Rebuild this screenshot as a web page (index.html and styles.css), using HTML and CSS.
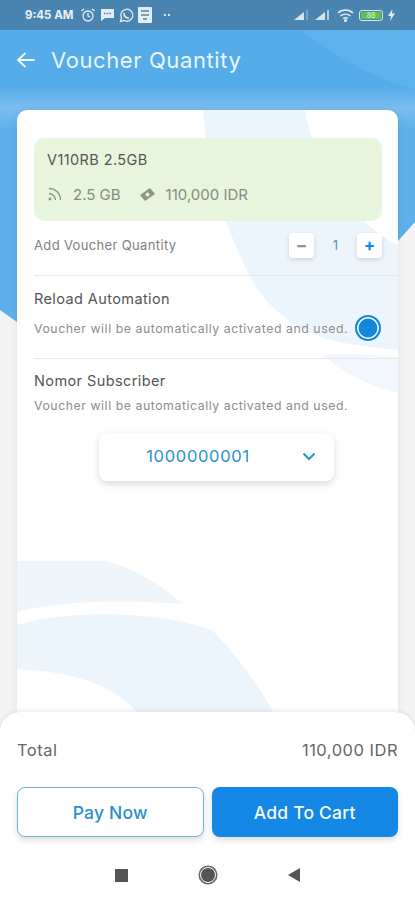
FILE: index.html
```html
<!DOCTYPE html>
<html lang="en">
<head>
    <meta charset="UTF-8">
    <meta name="viewport" content="width=device-width, initial-scale=1.0">
    <title>Voucher Quantity</title>
    <link rel="stylesheet" href="styles.css">
</head>
<body>

    <div class="page">
        <!-- blue backdrop behind header and card -->
        <svg class="backdrop" width="415" height="330" viewBox="0 0 415 330">
            <defs>
                <linearGradient id="band" x1="0" y1="0" x2="0" y2="1">
                    <stop offset="0" stop-color="#55ace9"/>
                    <stop offset="0.5" stop-color="#7cbdef"/>
                    <stop offset="1" stop-color="#5eb0ec"/>
                </linearGradient>
            </defs>
            <path d="M0 0H415V222L398 241L320 250C200 240 100 290 17 322L0 310Z" fill="#5eb0ec"/>
            <path d="M0 30H415V86H0Z" fill="#55ace9"/>
            <path d="M0 86H415V130H0Z" fill="url(#band)"/>
            <path d="M300 30C340 60 380 80 415 90V30Z" fill="#5db2ec"/>
        </svg>

        <div class="status-bar">
            <span class="clock">9:45 AM</span>
            <svg class="status-icon" width="16" height="16" viewBox="0 0 16 16" fill="none" stroke="#e4eef6" stroke-width="1.3">
                <circle cx="8" cy="9" r="5"/><path d="M8 6V9L10 10M1.5 4L4 2M14.5 4L12 2"/>
            </svg>
            <svg class="status-icon" width="15" height="14" viewBox="0 0 15 14">
                <path d="M1 1H14V10H5L1 13Z" fill="#e4eef6"/><path d="M4 5.5H11" stroke="#4a85b2" stroke-width="1.4" stroke-dasharray="1.5 1.2"/>
            </svg>
            <svg class="status-icon" width="15" height="15" viewBox="0 0 15 15" fill="none" stroke="#e4eef6" stroke-width="1.3">
                <path d="M1.5 13.5L2.5 10A6 6 0 1 1 5 12.5Z"/><path d="M5 5C5 8 7 10 10 10" stroke-width="1.6"/>
            </svg>
            <svg class="status-icon" width="14" height="16" viewBox="0 0 14 16">
                <rect width="14" height="16" rx="1" fill="#e4eef6"/><path d="M3 4H11M3 8H11M5 12H9" stroke="#7d9db5" stroke-width="2"/>
            </svg>
            <span class="status-dots"></span>
            <span class="status-spacer"></span>
            <svg class="status-icon signal" width="16" height="12" viewBox="0 0 16 12">
                <path d="M1 11L11 3V11Z" fill="#d6e4ee"/><path d="M14 1V11" stroke="#8fb1c9" stroke-width="1.5"/>
            </svg>
            <svg class="status-icon signal" width="16" height="12" viewBox="0 0 16 12">
                <path d="M1 11L11 3V11Z" fill="#d6e4ee"/><path d="M14 1V11" stroke="#d6e4ee" stroke-width="1.5"/>
            </svg>
            <svg class="status-icon wifi" width="17" height="14" viewBox="0 0 17 14" fill="none" stroke="#e4eef6" stroke-width="1.4">
                <path d="M1 5C5 1 12 1 16 5M3.5 8C6 5.5 11 5.5 13.5 8M6 10.5C7.5 9.5 9.5 9.500 11 10.5"/>
                <circle cx="8.5" cy="12.5" r="0.8" fill="#e4eef6"/>
            </svg>
            <span class="battery"><span class="battery-fill">88</span></span>
            <svg class="status-icon" width="7" height="12" viewBox="0 0 7 12">
                <path d="M4.5 0L0 7H3L2 12L7 4.5H4Z" fill="#e4eef6"/>
            </svg>
        </div>

        <header class="app-header">
            <svg width="20" height="18" viewBox="0 0 20 18" fill="none" stroke="#f2f9fe" stroke-width="1.8">
                <path d="M18.500 9H2M9.500 2L2 9L9.500 16"/>
            </svg>
            <h1>Voucher Quantity</h1>
        </header>

        <main class="content">
            <section class="card">
                <svg class="card-art" width="381" height="602" viewBox="0 0 381 602">
                    <path d="M186 0H288C296 50 330 110 381 135V240C340 236 320 232 306 228C270 215 245 190 235 170C205 115 190 50 186 0Z" fill="#edf5fc"/>
                    <path d="M306 245C330 243 360 245 381 247V283C350 275 325 262 306 245Z" fill="#f1f7fc"/>
                    <path d="M0 451H88C120 458 150 480 166 494C110 490 50 490 0 502Z" fill="#eef6fc"/>
                    <path d="M0 515C50 500 140 500 195 520C220 545 245 580 256 602H120C90 570 50 562 0 559Z" fill="#edf5fc"/>
                </svg>

                <div class="voucher">
                    <div class="voucher-name">V110RB 2.5GB</div>
                    <div class="voucher-meta">
                        <svg width="16" height="16" viewBox="0 0 16 16" fill="none" stroke="#8c9488" stroke-width="1.4">
                            <path d="M2 2.500C8.500 2.500 13.500 7.500 13.500 14M2 7.500C5.500 7.500 8.500 10.500 8.500 14"/>
                            <circle cx="3" cy="13" r="1.400" fill="#8c9488" stroke="none"/>
                        </svg>
                        <span class="meta-text">2.5 GB</span>
                        <svg class="money" width="17" height="15" viewBox="0 0 17 15">
                            <path d="M1 8L11 1L16 7L6 14Z" fill="#8c9488"/>
                            <circle cx="8.500" cy="7.500" r="2" fill="#e8f5dd"/>
                        </svg>
                        <span class="meta-text">110,000 IDR</span>
                    </div>
                </div>

                <div class="quantity-row">
                    <span class="small-text">Add Voucher Quantity</span>
                    <div class="stepper">
                        <button type="button" class="step-button minus">&minus;</button>
                        <span class="step-value">1</span>
                        <button type="button" class="step-button">+</button>
                    </div>
                </div>

                <div class="option">
                    <h3>Reload Automation</h3>
                    <div class="option-line">
                        <span class="small-text">Voucher will be automatically activated and used.</span>
                        <span class="radio"></span>
                    </div>
                </div>

                <div class="option subscriber">
                    <h3>Nomor Subscriber</h3>
                    <span class="small-text">Voucher will be automatically activated and used.</span>
                </div>

                <div class="dropdown">
                    <span>1000000001</span>
                    <svg class="chevron" width="14" height="9" viewBox="0 0 14 9" fill="none" stroke="#2a8fcf" stroke-width="2">
                        <path d="M1.500 1.500L7 7L12.500 1.500"/>
                    </svg>
                </div>
            </section>
        </main>

        <footer class="sheet">
            <div class="total-row">
                <span>Total</span>
                <span>110,000 IDR</span>
            </div>
            <div class="sheet-buttons">
                <button type="button" class="btn btn-outline">Pay Now</button>
                <button type="button" class="btn btn-solid">Add To Cart</button>
            </div>
        </footer>

        <nav class="nav-bar">
            <span class="nav-square"></span>
            <span class="nav-circle"></span>
            <span class="nav-back"></span>
        </nav>
    </div>

</body>
</html>
```

FILE: styles.css
```css
body {
    margin: 0;
    background: #f4f4f4;
    font-family: Inter, 'Open Sans', sans-serif;
    color: #555;
}

.page {
    position: relative;
    width: 415px;
    height: 900px;
    display: flex;
    flex-direction: column;
    overflow: hidden;
}

.backdrop {
    position: absolute;
    top: 0;
    left: 0;
}

/* status bar */
.status-bar {
    position: relative;
    height: 30px;
    background: #4a85b2;
    display: flex;
    align-items: center;
    gap: 4px;
    padding: 0 20px 0 25px;
    box-sizing: border-box;
    flex-shrink: 0;
}

.clock {
    font-size: 11.5px;
    font-weight: 700;
    color: #e8f1f8;
    margin-right: 3px;
    white-space: nowrap;
}

.status-dots {
    width: 7px;
    height: 2px;
    margin-left: 7px;
    background: radial-gradient(circle, #dbe8f2 1px, transparent 1.200px) 0 0 / 4px 2px repeat-x;
}

.status-spacer {
    flex: 1;
}

.signal {
    margin-right: 1px;
}

.wifi {
    margin: 0 1px 0 2px;
}

.battery {
    width: 24px;
    height: 11px;
    border: 1px solid #d9e8d6;
    border-radius: 3px;
    padding: 1px;
    box-sizing: border-box;
    display: flex;
    margin-right: 1px;
}

.battery-fill {
    flex: 1;
    background: #5cc24e;
    border-radius: 1px;
    color: #e9f7e6;
    font-size: 7px;
    line-height: 7px;
    text-align: center;
}

/* header */
.app-header {
    position: relative;
    height: 60px;
    display: flex;
    align-items: center;
    gap: 15px;
    padding-left: 16px;
    flex-shrink: 0;
}

.app-header h1 {
    margin: 0;
    font-size: 22px;
    font-weight: 400;
    color: #eaf6fe;
    letter-spacing: 0.6px;
}

/* card */
.content {
    position: relative;
    flex: 1;
    padding: 20px 17px 0;
    min-height: 0;
    display: flex;
}

.card {
    position: relative;
    flex: 1;
    background: #fff;
    border-radius: 10px 10px 0 0;
    box-shadow: 0 0 8px rgba(0, 0, 0, 0.08);
    padding: 28px 0 0 17px;
    box-sizing: border-box;
    overflow: hidden;
}

.card-art {
    position: absolute;
    top: 0;
    left: 0;
}

.voucher {
    position: relative;
    width: 348px;
    height: 83px;
    box-sizing: border-box;
    background: #e8f5dd;
    border-radius: 10px;
    padding: 13px 13px;
}

.voucher-name {
    font-size: 14.500px;
    font-weight: 400;
    color: #555;
    line-height: 18px;
    letter-spacing: 0.4px;
}

.voucher-meta {
    display: flex;
    align-items: center;
    margin-top: 16px;
    color: #858d82;
    font-size: 15px;
    height: 18px;
}

.meta-text {
    margin-left: 10px;
}

.money {
    margin-left: 18px;
}

.quantity-row {
    position: relative;
    display: flex;
    justify-content: space-between;
    align-items: center;
    width: 348px;
    height: 54px;
    box-sizing: border-box;
    padding-bottom: 6px;
}

.small-text {
    font-size: 12.300px;
    color: #8d8d8d;
    white-space: nowrap;
    letter-spacing: 0.55px;
}

.quantity-row .small-text {
    color: #808080;
    font-size: 13px;
    letter-spacing: 0.35px;
}

.stepper {
    display: flex;
    align-items: center;
}

.step-button {
    width: 25px;
    height: 25px;
    padding: 0;
    border: none;
    border-radius: 4px;
    background: #fff;
    box-shadow: 0 2px 5px rgba(0, 0, 0, 0.14);
    color: #1488dc;
    font-family: inherit;
    font-size: 17px;
    font-weight: 700;
    line-height: 25px;
}

.step-button.minus {
    color: #7e98aa;
}

.step-value {
    width: 43px;
    text-align: center;
    font-size: 13px;
    color: #5f8fae;
}

.option {
    position: relative;
    border-top: 1px solid #e6e8ea;
    height: 83px;
    box-sizing: border-box;
    padding-top: 14px;
}

.option h3 {
    margin: 0;
    font-size: 14.500px;
    font-weight: 400;
    line-height: 18px;
    color: #555;
    letter-spacing: 0.4px;
}

.option-line {
    display: flex;
    align-items: center;
    margin-top: 7px;
    height: 26px;
}

.radio {
    width: 26px;
    height: 26px;
    box-sizing: border-box;
    margin-left: 7px;
    border: 2px solid #1488dc;
    border-radius: 50%;
    background: #1488dc;
    box-shadow: inset 0 0 0 1.500px #fff;
}

.subscriber {
    height: 75px;
    padding-top: 13px;
}

.subscriber .small-text {
    display: block;
    margin-top: 8px;
}

.dropdown {
    position: relative;
    width: 235px;
    height: 48px;
    margin-left: 65px;
    display: flex;
    align-items: center;
    justify-content: center;
    box-sizing: border-box;
    background: #fff;
    border-radius: 8px;
    box-shadow: 0 3px 7px rgba(0, 0, 0, 0.15);
    color: #2a8fcf;
    font-size: 16.500px;
    letter-spacing: 0.7px;
    padding-right: 37px;
    padding-bottom: 2px;
}

.chevron {
    position: absolute;
    right: 18px;
    top: 19px;
}

/* bottom sheet */
.sheet {
    position: relative;
    height: 138px;
    box-sizing: border-box;
    background: #fff;
    border-radius: 20px 20px 0 0;
    box-shadow: 0 -1px 4px rgba(0, 0, 0, 0.1);
    padding: 28px 17px 0;
    flex-shrink: 0;
}

.total-row {
    display: flex;
    justify-content: space-between;
    font-size: 16.500px;
    letter-spacing: 0.5px;
    line-height: 20px;
    color: #666;
}

.sheet-buttons {
    display: grid;
    grid-template-columns: 1fr 1fr;
    gap: 8px;
    margin-top: 27px;
}

.btn {
    height: 50px;
    border-radius: 8px;
    font-family: inherit;
    font-size: 17.500px;
    font-weight: 500;
    letter-spacing: 0.2px;
    box-shadow: 0 3px 6px rgba(0, 0, 0, 0.14);
}

.btn-outline {
    background: #fff;
    border: 1.500px solid #74b4d8;
    color: #2a8fcf;
}

.btn-solid {
    background: #1488e4;
    border: none;
    color: #f4faff;
}

/* android nav */
.nav-bar {
    position: relative;
    height: 50px;
    background: #fff;
    flex-shrink: 0;
    display: flex;
    align-items: center;
    justify-content: center;
    gap: 72px;
}

.nav-square {
    width: 13px;
    height: 13px;
    background: #555;
}

.nav-circle {
    width: 14px;
    height: 14px;
    border-radius: 50%;
    background: #555;
    border: 1px solid #fff;
    box-shadow: 0 0 0 1.500px #666;
}

.nav-back {
    width: 0;
    height: 0;
    border-style: solid;
    border-width: 7px 12px 7px 0;
    border-color: transparent #555 transparent transparent;
}
```
